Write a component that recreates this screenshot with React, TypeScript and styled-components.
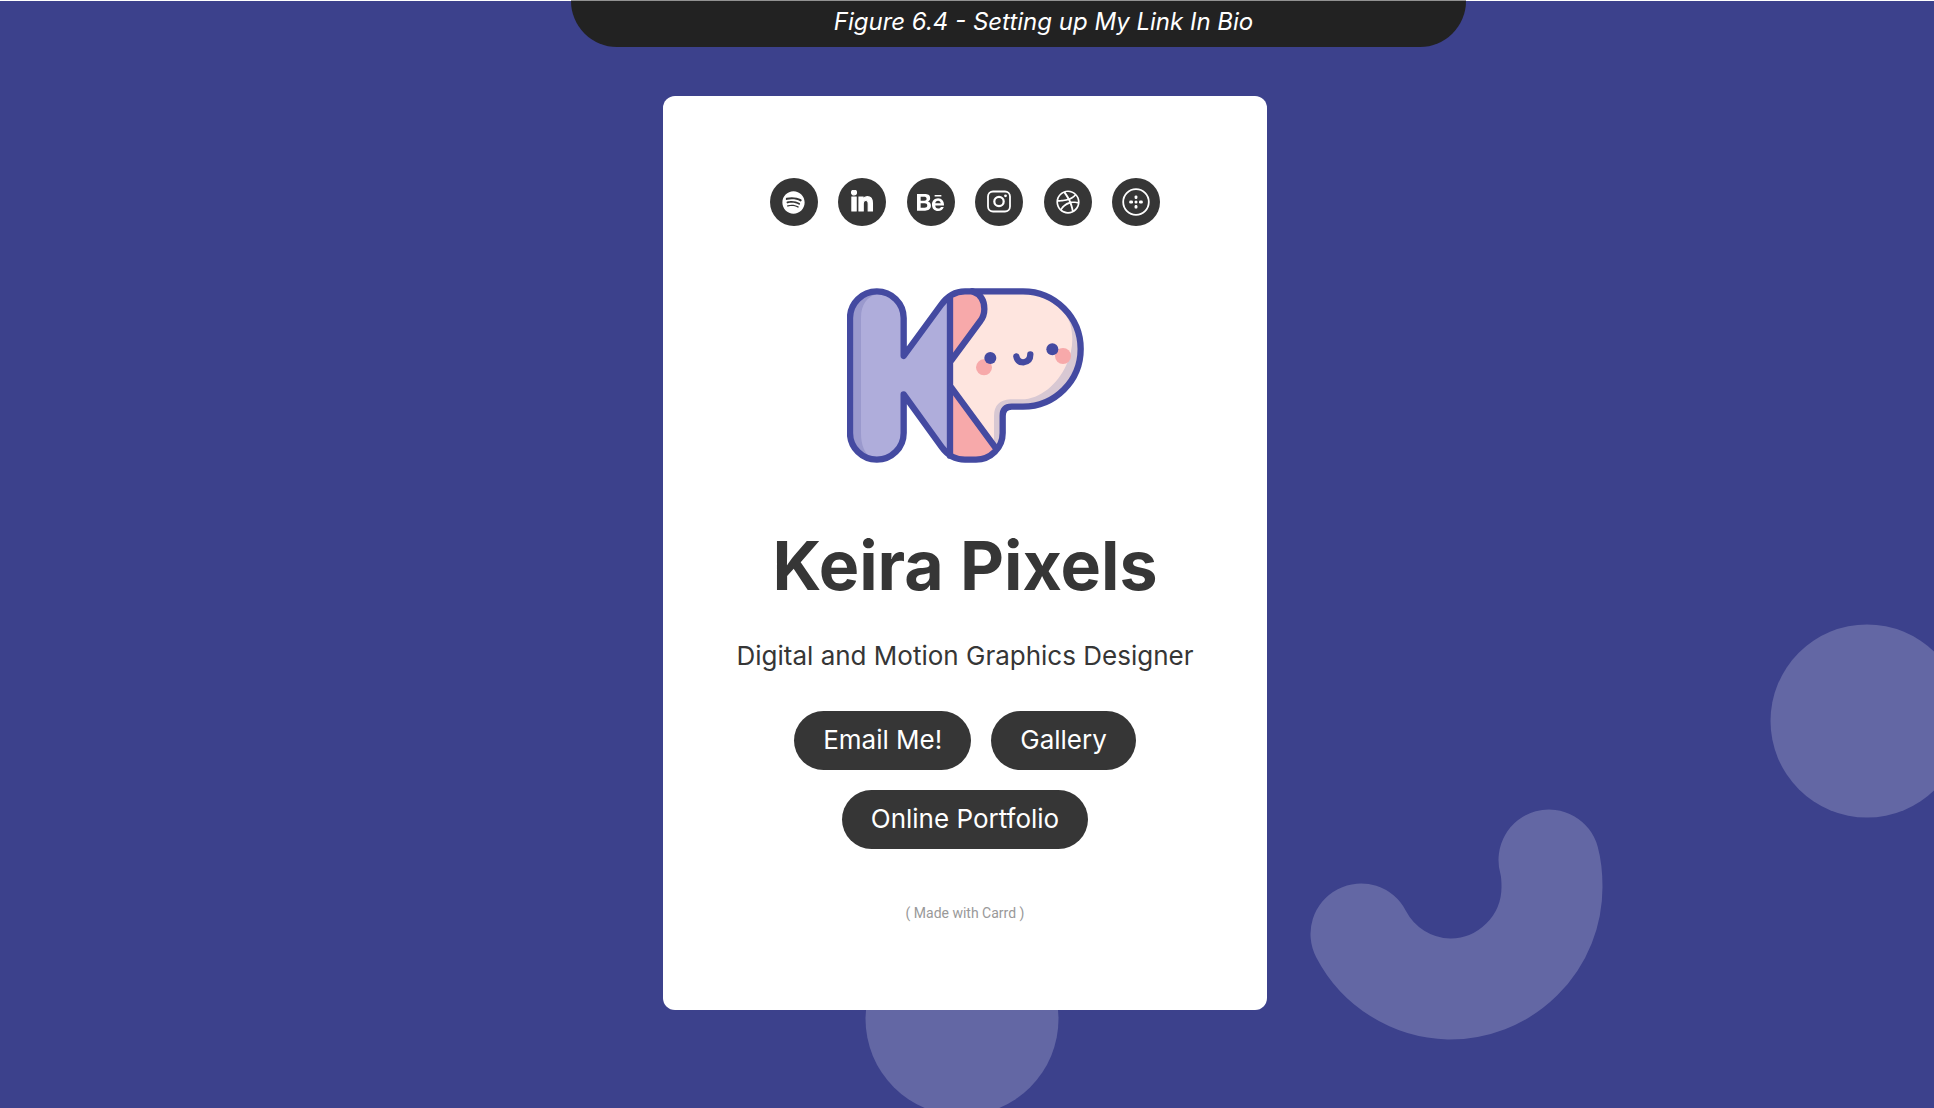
import React from "react";
import styled, { createGlobalStyle } from "styled-components";
import { FaSpotify, FaLinkedinIn, FaBehance, FaDribbble } from "react-icons/fa6";

const colors = {
  backdrop: "#3c418c",
  shape: "#6367a4",
  tab: "#222222",
  ink: "#363636",
  muted: "#999999",
};

const GlobalStyle = createGlobalStyle`
  *, *::before, *::after { box-sizing: border-box; }
  body {
    margin: 0;
    background: #ffffff;
    color: ${colors.ink};
    font-family: Inter, "Liberation Sans", sans-serif;
  }
`;

const Page = styled.div`
  position: relative;
  display: flex;
  flex-direction: column;
  min-height: 100vh;
  border-top: 1px solid #ffffff;
  background: ${colors.backdrop};
`;

const Backdrop = styled.svg`
  position: absolute;
  inset: 0;
  width: 100%;
  height: 100%;
`;

const Header = styled.header`
  position: relative;
  display: flex;
  justify-content: center;
  margin-top: -1px;
  padding-left: 103px;
`;

const Caption = styled.h2`
  width: 100%;
  max-width: 895px;
  margin: 0;
  padding: 1px 0 5px 50px;
  border-top: 1px solid #929292;
  border-radius: 0 0 46px 46px;
  background: ${colors.tab};
  color: #ffffff;
  font-size: 24px;
  font-style: italic;
  font-weight: 400;
  line-height: 40px;
  text-align: center;
`;

const Main = styled.main`
  position: relative;
  display: flex;
  justify-content: center;
  padding: 49px 4px 98px 0;
`;

const Card = styled.article`
  display: flex;
  flex-direction: column;
  align-items: center;
  width: 100%;
  max-width: 604px;
  padding: 82px 64px 86px;
  border-radius: 12px;
  background: #ffffff;
`;

const Socials = styled.ul`
  display: flex;
  justify-content: space-between;
  width: 100%;
  max-width: 391px;
  margin: 0;
  padding: 0;
  list-style: none;
`;

const SocialLink = styled.a`
  display: flex;
  align-items: center;
  justify-content: center;
  width: 48px;
  height: 48px;
  border-radius: 50%;
  background: ${colors.ink};
  color: #ffffff;
`;

const Logo = styled.svg`
  width: 237px;
  height: 175px;
  margin-top: 62px;
`;

const Name = styled.h1`
  margin: 62px 0 0;
  font-size: 68px;
  font-weight: 700;
  line-height: 80px;
  white-space: nowrap;
`;

const Role = styled.p`
  margin: 35px 0 0;
  font-size: 26px;
  line-height: 32px;
  white-space: nowrap;
`;

const Actions = styled.nav`
  display: flex;
  flex-wrap: wrap;
  justify-content: center;
  gap: 20px;
  margin-top: 39px;
`;

const Action = styled.a`
  padding: 13px 29px 14px;
  border-radius: 30px;
  background: ${colors.ink};
  color: #ffffff;
  font-size: 26px;
  line-height: 32px;
  text-decoration: none;
`;

const Credit = styled.a`
  margin-top: 54px;
  margin-bottom: 1px;
  color: ${colors.muted};
  font-family: Roboto, "Liberation Sans", sans-serif;
  font-size: 14px;
  line-height: 20px;
  text-decoration: none;
`;

const InstagramIcon = () => (
  <svg width="26" height="26" viewBox="0 0 26 26" fill="none" stroke="currentColor" aria-hidden="true">
    <rect x="2" y="2.5" width="22" height="20" rx="5" strokeWidth="1.8" />
    <circle cx="13" cy="12.5" r="4.7" strokeWidth="2.2" />
    <circle cx="19.5" cy="6.8" r="1.4" fill="currentColor" stroke="none" />
  </svg>
);

const DotsIcon = () => (
  <svg width="30" height="30" viewBox="0 0 30 30" fill="currentColor" aria-hidden="true">
    <circle cx="15" cy="15" r="12.8" fill="none" stroke="currentColor" strokeWidth="1.8" />
    <circle cx="15" cy="15" r="1.5" />
    <rect x="13.6" y="8.4" width="2.8" height="3.6" rx="1.2" />
    <rect x="13.6" y="18" width="2.8" height="3.6" rx="1.2" />
    <rect x="8.2" y="13.6" width="3.8" height="2.8" rx="1.2" />
    <rect x="18" y="13.6" width="3.8" height="2.8" rx="1.2" />
  </svg>
);

const socials = [
  { label: "Spotify", icon: <FaSpotify size={23} /> },
  { label: "LinkedIn", icon: <FaLinkedinIn size={24} stroke="currentColor" strokeWidth={22} /> },
  { label: "Behance", icon: <FaBehance size={27} /> },
  { label: "Instagram", icon: <InstagramIcon /> },
  { label: "Dribbble", icon: <FaDribbble size={24} /> },
  { label: "More", icon: <DotsIcon /> },
];

const actions = ["Email Me!", "Gallery", "Online Portfolio"];

const BackdropShapes = () => (
  <Backdrop viewBox="0 0 1934 1107" preserveAspectRatio="xMidYMid slice" aria-hidden="true">
    <circle cx="1867" cy="720" r="96.5" fill={colors.shape} />
    <circle cx="962" cy="1018" r="96.5" fill={colors.shape} />
    <path
      d="M1361 933 A102 102 0 0 0 1449 988 A102 102 0 0 0 1552 886 Q1552 870 1549 859"
      fill="none"
      stroke={colors.shape}
      strokeWidth="101"
      strokeLinecap="round"
      strokeLinejoin="round"
    />
  </Backdrop>
);

/* The two letters share one outline; the P is a face tucked behind the folded K. */
const KPLogo = () => (
  <Logo viewBox="36 41 711 525" role="img" aria-label="KP logo">
    <path
      d="M345 72 Q328 80 318 95 L206 245 V131 A80.5 80 0 0 0 45 131 V476 A80.5 80 0 0 0 206 476 V360 L320 520 Q332 538 345 544 Z"
      fill="#afaddb"
    />
    <path
      d="M126 60 C96 66 78 92 78 131 V476 C78 515 90 535 104 548 C70 540 50 510 50 476 V131 C50 90 80 57 126 51 Z"
      fill="#9a99cd"
    />
    <path
      d="M345 72 Q362 51 390 51 H564 A173 173 0 0 1 564 397 H530 Q503 397 503 425 V476 A80 80 0 0 1 423 556 H390 Q362 556 345 544 Z"
      fill="#d8c8d3"
    />
    <path
      d="M345 60 H564 C640 60 695 110 706 150 C716 190 714 230 694 272 C668 330 615 375 560 375 H526 Q477 378 477 425 V512 L460 520 L345 350 Z"
      fill="#fee5df"
    />
    <path d="M345 72 Q362 51 390 51 Q448 51 448 104 Q448 125 436 140 L345 262 Z" fill="#f7a9aa" />
    <path d="M345 340 L483 524 Q462 556 423 556 H390 Q362 556 345 544 Z" fill="#f7a9aa" />
    <g fill="none" stroke="#444aa1" strokeWidth="19" strokeLinecap="round" strokeLinejoin="round">
      <path d="M206 245 V131 A80.5 80 0 0 0 45 131 V476 A80.5 80 0 0 0 206 476 V360 L320 518 Q347 556 390 556 H423 A80 80 0 0 0 503 476 V425 Q503 397 530 397 H564 A173 173 0 0 0 564 51 H390 Q347 51 318 92 Z" />
      <path d="M345 72 V544" />
      <path d="M412 51 Q448 64 448 104 Q448 125 436 140 L349 258" />
      <path d="M349 340 L483 522" />
      <path d="M544 246 Q547 264 565 264 Q586 262 586 240" />
    </g>
    <circle cx="447" cy="279" r="24" fill="#f7a9aa" />
    <circle cx="684" cy="245" r="24" fill="#f7a9aa" />
    <circle cx="466" cy="251" r="18" fill="#444aa1" />
    <circle cx="652" cy="225" r="18" fill="#444aa1" />
  </Logo>
);

export default function App() {
  return (
    <Page>
      <GlobalStyle />
      <BackdropShapes />
      <Header>
        <Caption>Figure 6.4 - Setting up My Link In Bio</Caption>
      </Header>
      <Main>
        <Card>
          <Socials>
            {socials.map(({ label, icon }) => (
              <li key={label}>
                <SocialLink href="#" aria-label={label}>
                  {icon}
                </SocialLink>
              </li>
            ))}
          </Socials>
          <KPLogo />
          <Name>Keira Pixels</Name>
          <Role>Digital and Motion Graphics Designer</Role>
          <Actions>
            {actions.map((label) => (
              <Action key={label} href="#">
                {label}
              </Action>
            ))}
          </Actions>
          <Credit href="#">( Made with Carrd )</Credit>
        </Card>
      </Main>
    </Page>
  );
}
